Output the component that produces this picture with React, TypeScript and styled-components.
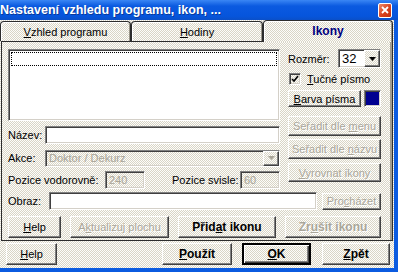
import React from "react";
import styled, { createGlobalStyle, css } from "styled-components";

const GlobalStyle = createGlobalStyle`
  body {
    margin: 0;
    font-family: "Liberation Sans", Arial, sans-serif;
    font-size: 11px;
    color: #000;
  }
`;

const dither = css`
  background-color: #fdfdfb;
  background-image: repeating-conic-gradient(#d9d5c6 0 25%, transparent 0 50%);
  background-size: 2px 2px;
`;

const sunken = css`
  border: 1px solid;
  border-color: #808080 #ffffff #ffffff #808080;
  box-shadow: inset 1px 1px 0 #404040, inset -1px -1px 0 #d4d0c8;
`;

const Window = styled.div`
  width: 398px;
  height: 272px;
  display: flex;
  flex-direction: column;
  overflow: hidden;
  background: #0b5be0;
`;

const TitleBar = styled.div`
  height: 20px;
  flex: none;
  display: flex;
  align-items: center;
  justify-content: space-between;
  padding-right: 6px;
  background: linear-gradient(#3a86f4, #0b5ae0 30%, #0655dc 80%, #0a4fc8);
  color: #fff;
  font-weight: bold;
  font-size: 12.5px;
`;

const Title = styled.span`
  margin-left: 0;
  text-shadow: 1px 1px 0 #0a3a9a;
`;

const CloseBox = styled.div`
  width: 12px;
  height: 13px;
  border: 1px solid #fff;
  border-radius: 2px;
  background: linear-gradient(135deg, #f08a6a, #d8401c 55%, #c0300e);
  display: flex;
  align-items: center;
  justify-content: center;
`;

const Body = styled.div`
  flex: 1;
  margin: 0 4px 4px 0;
  ${dither};
  display: flex;
  flex-direction: column;
`;

const TabRow = styled.div`
  height: 21px;
  display: flex;
  align-items: flex-end;
  position: relative;
  z-index: 1;
`;

const Tab = styled.div<{ $w: number; $active?: boolean }>`
  width: ${(p) => p.$w}px;
  height: ${(p) => (p.$active ? 22 : 20)}px;
  box-sizing: border-box;
  ${dither};
  border: 1px solid #2c2c2c;
  border-bottom: none;
  border-radius: 4px 4px 0 0;
  box-shadow: inset 1px 1px 0 #fff, inset -1px 0 0 #9a968a;
  display: flex;
  align-items: center;
  justify-content: center;
  padding-bottom: ${(p) => (p.$active ? 1 : 0)}px;
  margin-bottom: ${(p) => (p.$active ? -1 : 0)}px;
  font-weight: ${(p) => (p.$active ? "bold" : "normal")};
  color: ${(p) => (p.$active ? "#000080" : "#000")};
  font-size: ${(p) => (p.$active ? 12 : 11)}px;
`;

const Panel = styled.div`
  margin-left: 1px;
  width: 392px;
  height: 200px;
  box-sizing: border-box;
  border: 1px solid #2c2c2c;
  border-right-color: #303030;
  box-shadow: inset -2px 0 0 #a09c90;
  padding: 7px 11px 0 6px;
  display: flex;
  flex-direction: column;
`;

const Top = styled.div`
  display: grid;
  grid-template-columns: 272px 93px;
  column-gap: 8px;
`;

const Column = styled.div`
  display: flex;
  flex-direction: column;
`;

const ListBox = styled.div`
  height: 72px;
  box-sizing: border-box;
  background: #fff;
  ${sunken};
  padding: 2px;
`;

const FocusRow = styled.div`
  height: 14px;
  box-sizing: border-box;
  border: 1px dotted #000;
`;

const Row = styled.div<{ $mt: number }>`
  display: flex;
  align-items: center;
  margin-top: ${(p) => p.$mt}px;
  height: 18px;
`;

const Label = styled.span<{ $w?: number; $ml?: number }>`
  width: ${(p) => (p.$w ? `${p.$w}px` : "auto")};
  margin-left: ${(p) => p.$ml ?? 0}px;
  flex: none;
  white-space: nowrap;
`;

const Field = styled.div<{ $w?: number; $off?: boolean; $h?: number }>`
  ${(p) => (p.$w ? `width: ${p.$w}px; flex: none;` : "flex: 1;")}
  height: ${(p) => p.$h ?? 18}px;
  box-sizing: border-box;
  ${sunken};
  ${(p) => (p.$off ? dither : "background: #fff;")}
  color: ${(p) => (p.$off ? "#a8a498" : "#000")};
  display: flex;
  align-items: center;
  padding-left: 3px;
  font-size: 11px;
  overflow: hidden;
`;

const DropBtn = styled.div<{ $off?: boolean }>`
  margin-left: auto;
  width: 16px;
  height: 100%;
  box-sizing: border-box;
  ${dither};
  border: 1px solid;
  border-color: #fff #404040 #404040 #fff;
  box-shadow: inset -1px -1px 0 #808080;
  display: flex;
  align-items: center;
  justify-content: center;
`;

const Button = styled.button<{ $w?: number; $h?: number; $bold?: boolean; $def?: boolean }>`
  width: ${(p) => (p.$w ? `${p.$w}px` : "100%")};
  height: ${(p) => p.$h ?? 20}px;
  flex: none;
  box-sizing: border-box;
  padding: 0;
  ${dither};
  font-family: "Liberation Sans", Arial, sans-serif;
  font-size: ${(p) => (p.$bold ? 12 : 11)}px;
  font-weight: ${(p) => (p.$bold ? "bold" : "normal")};
  color: #000;
  border: 1px solid;
  border-color: #fff #404040 #404040 #fff;
  box-shadow: inset -1px -1px 0 #808080;
  ${(p) =>
    p.$def &&
    css`
      outline: 1px solid #000;
      outline-offset: 0;
      border-color: #000;
      box-shadow: inset 1px 1px 0 #fff, inset -1px -1px 0 #404040, inset -2px -2px 0 #808080;
    `}
  &:disabled {
    color: #aaa69a;
    text-shadow: 1px 1px 0 #fff;
  }
  white-space: nowrap;
`;

const SizeRow = styled.div`
  display: flex;
  align-items: center;
  height: 19px;
  justify-content: space-between;
`;

const CheckRow = styled.div`
  display: flex;
  align-items: center;
  height: 13px;
  margin-top: 4px;
  padding-left: 1px;
  gap: 6px;
`;

const CheckBox = styled.div`
  width: 12px;
  height: 12px;
  box-sizing: border-box;
  ${sunken};
  ${dither};
  display: flex;
  align-items: center;
  justify-content: center;
`;

const ColorRow = styled.div`
  display: flex;
  gap: 3px;
  margin-top: 5px;
`;

const Swatch = styled.div`
  width: 17px;
  height: 17px;
  box-sizing: border-box;
  ${sunken};
  background: #000090;
`;

const RightBtn = styled.div<{ $mt: number }>`
  margin-top: ${(p) => p.$mt}px;
  display: flex;
`;

const ObrazRow = styled.div`
  display: flex;
  align-items: center;
  margin-top: 3px;
  height: 18px;
  gap: 5px;
`;

const ButtonRow = styled.div<{ $mt: number; $pl?: number }>`
  display: flex;
  justify-content: space-between;
  margin-top: ${(p) => p.$mt}px;
  padding-left: ${(p) => p.$pl ?? 0}px;
`;

const BottomRow = styled.div`
  display: flex;
  align-items: center;
  margin-top: 2px;
  padding-left: 6px;
`;

const Gap = styled.div<{ $w: number }>`
  width: ${(p) => p.$w}px;
  flex: none;
`;

const Arrow = ({ off }: { off?: boolean }) => (
  <svg width="7" height="4" viewBox="0 0 7 4">
    <path d="M0 0h7L3.5 4z" fill={off ? "#a8a498" : "#000"} />
  </svg>
);

export default function App() {
  return (
    <>
      <GlobalStyle />
      <Window>
        <TitleBar>
          <Title>Nastavení vzhledu programu, ikon, ...</Title>
          <CloseBox>
            <svg width="8" height="8" viewBox="0 0 8 8">
              <path d="M1 1l6 6M7 1L1 7" stroke="#fff" strokeWidth="1.8" />
            </svg>
          </CloseBox>
        </TitleBar>
        <Body>
          <TabRow>
            <Tab $w={131}>
              <span>
                <u>V</u>zhled programu
              </span>
            </Tab>
            <Tab $w={132}>
              <span>
                <u>H</u>odiny
              </span>
            </Tab>
            <Tab $w={130} $active>
              Ikony
            </Tab>
          </TabRow>
          <Panel>
            <Top>
              <Column>
                <ListBox>
                  <FocusRow />
                </ListBox>
                <Row $mt={5}>
                  <Label $w={37}>Název:</Label>
                  <Field />
                </Row>
                <Row $mt={5}>
                  <Label $w={37}>Akce:</Label>
                  <Field $off $h={17}>
                    Doktor / Dekurz
                    <DropBtn $off>
                      <Arrow off />
                    </DropBtn>
                  </Field>
                </Row>
                <Row $mt={4}>
                  <Label $w={97}>Pozice vodorovně:</Label>
                  <Field $w={40} $off>
                    240
                  </Field>
                  <Label $ml={27} $w={68}>
                    Pozice svisle:
                  </Label>
                  <Field $off>60</Field>
                </Row>
              </Column>
              <Column>
                <SizeRow>
                  <Label>Rozměr:</Label>
                  <Field $w={43} $h={19}>
                    <span style={{ fontSize: 13 }}>32</span>
                    <DropBtn>
                      <Arrow />
                    </DropBtn>
                  </Field>
                </SizeRow>
                <CheckRow>
                  <CheckBox>
                    <svg width="8" height="8" viewBox="0 0 8 8">
                      <path d="M1 4l2 2 4-5" stroke="#000" strokeWidth="1.6" fill="none" />
                    </svg>
                  </CheckBox>
                  <span>
                    <u>T</u>učné písmo
                  </span>
                </CheckRow>
                <ColorRow>
                  <Button $w={73} $h={17}>
                    <u>B</u>arva písma
                  </Button>
                  <Swatch />
                </ColorRow>
                <RightBtn $mt={9}>
                  <Button disabled>
                    Seřadit dle <u>m</u>enu
                  </Button>
                </RightBtn>
                <RightBtn $mt={3}>
                  <Button disabled>
                    Seřadit dle <u>n</u>ázvu
                  </Button>
                </RightBtn>
                <RightBtn $mt={4}>
                  <Button disabled $h={19}>
                    <u>V</u>yrovnat ikony
                  </Button>
                </RightBtn>
              </Column>
            </Top>
            <ObrazRow>
              <Label $w={36}>Obraz:</Label>
              <Field />
              <Button disabled $w={59} $h={17}>
                Pro<u>c</u>házet
              </Button>
            </ObrazRow>
            <ButtonRow $mt={6}>
              <Button $w={53} $h={22}>
                <u>H</u>elp
              </Button>
              <Button $w={99} $h={22} disabled>
                A<u>k</u>tualizuj plochu
              </Button>
              <Button $w={98} $h={22} $bold>
                Přid<u>a</u>t ikonu
              </Button>
              <Button $w={96} $h={22} $bold disabled>
                Zr<u>u</u>šit ikonu
              </Button>
            </ButtonRow>
          </Panel>
          <BottomRow>
            <Button $w={51} $h={22}>
              <u>H</u>elp
            </Button>
            <Gap $w={105} />
            <Button $w={70} $h={22} $bold>
              <u>P</u>oužít
            </Button>
            <Gap $w={11} />
            <Button $w={67} $h={20} $bold $def>
              <u>O</u>K
            </Button>
            <Gap $w={12} />
            <Button $w={68} $h={22} $bold>
              <u>Z</u>pět
            </Button>
          </BottomRow>
        </Body>
      </Window>
    </>
  );
}
